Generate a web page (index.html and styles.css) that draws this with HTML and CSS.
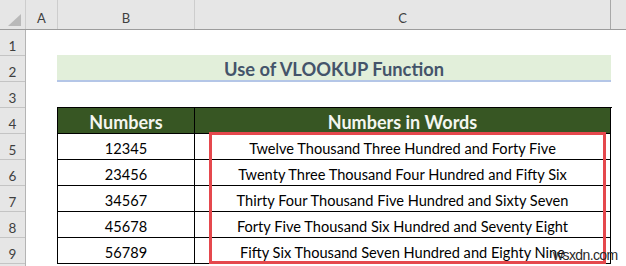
FILE: index.html
```html
<!DOCTYPE html>
<html>
<head>
<meta charset="utf-8">
<link rel="stylesheet" href="styles.css">
</head>
<body>
<div class="sheet">
  <div class="colhead">
    <div class="corner"><svg width="14" height="13" viewBox="0 0 14 13"><polygon points="13,0 13,12 0,12" fill="#b9b9b9"/></svg></div>
    <div class="ch col-a">A</div>
    <div class="ch col-b">B</div>
    <div class="ch col-c">C</div>
    <div class="ch col-d"></div>
  </div>
  <div class="body">
    <div class="rowhead">
      <div class="rh">1</div>
      <div class="rh">2</div>
      <div class="rh">3</div>
      <div class="rh">4</div>
      <div class="rh">5</div>
      <div class="rh">6</div>
      <div class="rh">7</div>
      <div class="rh">8</div>
      <div class="rh">9</div>
      <div class="rh"></div>
    </div>
    <div class="cells">
      <div class="spacer"></div>
      <div class="title">Use of VLOOKUP Function</div>
      <div class="spacer"></div>
      <div class="table">
        <div class="tr th"><div class="td b">Numbers</div><div class="td c">Numbers in Words</div></div>
        <div class="tr"><div class="td b">12345</div><div class="td c">Twelve Thousand Three Hundred and Forty Five</div></div>
        <div class="tr"><div class="td b">23456</div><div class="td c">Twenty Three Thousand Four Hundred and Fifty Six</div></div>
        <div class="tr"><div class="td b">34567</div><div class="td c">Thirty Four Thousand Five Hundred and Sixty Seven</div></div>
        <div class="tr"><div class="td b">45678</div><div class="td c">Forty Five Thousand Six Hundred and Seventy Eight</div></div>
        <div class="tr"><div class="td b">56789</div><div class="td c">Fifty Six Thousand Seven Hundred and Eighty Nine</div></div>
      </div>
    </div>
  </div>
  <div class="highlight"></div>
  <div class="watermark">wsxdn.com</div>
</div>
</body>
</html>
```
FILE: styles.css
```css
html, body {
  margin: 0;
  padding: 0;
  background: #ffffff;
}
.sheet {
  position: relative;
  width: 626px;
  height: 266px;
  overflow: hidden;
  font-family: Lato, "Open Sans", sans-serif;
}
.colhead {
  display: flex;
  height: 30px;
  box-sizing: border-box;
  background: #e6e6e6;
  border-bottom: 1px solid #9c9c9c;
}
.corner {
  width: 26px;
  flex: none;
  box-sizing: border-box;
  border-right: 1px solid #cdcdcd;
  display: flex;
  align-items: flex-end;
  justify-content: flex-end;
  padding: 0 3px 2px 0;
}
.ch {
  box-sizing: border-box;
  border-right: 1px solid #cdcdcd;
  display: flex;
  justify-content: center;
  align-items: center;
  padding-top: 6px;
  font-size: 13px;
  color: #3f3f3f;
  flex: none;
}
.col-a { width: 32px; }
.col-b { width: 137px; }
.col-c { width: 416px; border-right-color: #a8a8a8; }
.col-d { flex: 1; border-right: none; }
.body {
  display: flex;
}
.rowhead {
  width: 26px;
  flex: none;
  box-sizing: border-box;
  background: #e6e6e6;
  border-right: 1px solid #b4b4b4;
}
.rh {
  height: 26px;
  box-sizing: border-box;
  border-bottom: 1px solid #c4c4c4;
  display: flex;
  justify-content: center;
  align-items: center;
  padding-top: 7px;
  font-size: 13.5px;
  color: #3f3f3f;
}
.cells {
  flex: 1;
  padding-left: 31px;
}
.spacer {
  height: 25px;
}
.title {
  width: 554px;
  height: 27px;
  box-sizing: border-box;
  background: #e2efda;
  border-bottom: 2px solid #b4c6e7;
  display: flex;
  justify-content: center;
  align-items: center;
  padding-top: 2px;
  font-weight: 700;
  font-size: 18.3px;
  color: #44546a;
}
.table {
  width: 554px;
  border-left: 1px solid #000;
  border-top: 1px solid #000;
}
.tr {
  display: flex;
}
.td {
  height: 26px;
  box-sizing: border-box;
  border-right: 1px solid #000;
  border-bottom: 1px solid #000;
  display: flex;
  justify-content: center;
  align-items: center;
  padding-top: 3px;
  font-size: 14.6px;
  color: #000;
}
.td.b { width: 137px; }
.td.c { width: 416px; }
.th .td {
  background: #375623;
  color: #f4f6f0;
  font-weight: 700;
  font-size: 18px;
  padding-top: 2px;
}
.highlight {
  position: absolute;
  left: 209px;
  top: 132px;
  width: 397px;
  height: 132px;
  box-sizing: border-box;
  border: 3px solid #e5484d;
}
.watermark {
  position: absolute;
  left: 553px;
  top: 247px;
  font-family: "Liberation Sans", Arial, sans-serif;
  font-size: 14px;
  letter-spacing: -0.6px;
  color: #2a2a2a;
}
```
